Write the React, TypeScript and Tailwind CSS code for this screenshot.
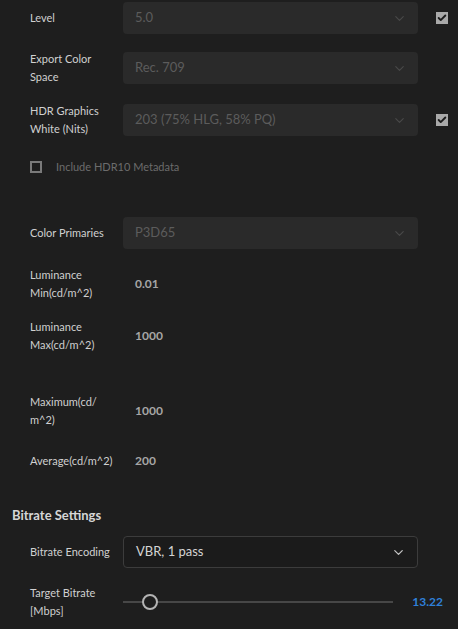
import { ChevronDown, Check } from 'lucide-react'

const font = { fontFamily: 'Lato, "Open Sans", sans-serif' }

function Label({ lines }: { lines: string[] }) {
  return (
    <div className="w-[93px] shrink-0 text-[11px] leading-[18px] text-[#d0d0d0]">
      {lines.map((l) => (
        <div key={l}>{l}</div>
      ))}
    </div>
  )
}

function DisabledSelect({ value }: { value: string }) {
  return (
    <div className="flex h-8 w-[295px] items-center justify-between rounded-[4px] bg-[#2a2a2a] pl-3 pr-[11px]">
      <span className="text-[13px] text-[#5c5c5c]">{value}</span>
      <ChevronDown className="h-[15px] w-[15px] text-[#4a4a4a]" strokeWidth={1.75} />
    </div>
  )
}

function CheckedBox() {
  return (
    <div className="flex h-3 w-3 items-center justify-center bg-[#a9a9a9]">
      <Check className="h-[10px] w-[10px] text-[#1c1c1c]" strokeWidth={4.5} />
    </div>
  )
}

function Row({
  label,
  children,
  className = '',
}: {
  label: string[]
  children: React.ReactNode
  className?: string
}) {
  return (
    <div className={`flex items-center pl-[30px] ${className}`}>
      <Label lines={label} />
      {children}
    </div>
  )
}

function Value({ v }: { v: string }) {
  return <span className="pl-3 text-[12px] font-bold text-[#a6a6a6]">{v}</span>
}

export default function App() {
  return (
    <div className="h-[629px] w-[458px] overflow-hidden bg-[#1e1e1e]" style={font}>
      <Row label={['Level']} className="mt-[2px] h-8">
        <DisabledSelect value="5.0" />
        <div className="ml-[18px]">
          <CheckedBox />
        </div>
      </Row>

      <Row label={['Export Color', 'Space']} className="mt-[18px] h-8">
        <DisabledSelect value="Rec. 709" />
      </Row>

      <Row label={['HDR Graphics', 'White (Nits)']} className="mt-5 h-8">
        <DisabledSelect value="203 (75% HLG, 58% PQ)" />
        <div className="ml-[18px]">
          <CheckedBox />
        </div>
      </Row>

      <div className="mt-[23px] flex h-4 items-center gap-[14px] pl-[30px]">
        <div className="h-3 w-3 border-2 border-[#7a7a7a]" />
        <span className="text-[11px] text-[#6c6c6c]">Include HDR10 Metadata</span>
      </div>

      <Row label={['Color Primaries']} className="mt-[42px] h-8">
        <DisabledSelect value="P3D65" />
      </Row>

      <Row label={['Luminance', 'Min(cd/m^2)']} className="mt-[17px] h-9">
        <Value v="0.01" />
      </Row>

      <Row label={['Luminance', 'Max(cd/m^2)']} className="mt-4 h-9">
        <Value v="1000" />
      </Row>

      <Row label={['Maximum(cd/', 'm^2)']} className="mt-[39px] h-9">
        <Value v="1000" />
      </Row>

      <Row label={['Average(cd/m^2)']} className="mt-[23px] h-[18px]">
        <Value v="200" />
      </Row>

      <div className="mt-9 flex h-5 items-center pl-3 text-[13px] font-bold text-[#d6d6d6]">
        Bitrate Settings
      </div>

      <Row label={['Bitrate Encoding']} className="mt-[10px] h-8">
        <div className="flex h-8 w-[295px] items-center justify-between rounded-[4px] border border-[#3c3c3c] bg-[#1b1b1b] pl-3 pr-[11px]">
          <span className="text-[13px] text-[#d4d4d4]">VBR, 1 pass</span>
          <ChevronDown className="h-[15px] w-[15px] text-[#c4c4c4]" strokeWidth={2} />
        </div>
      </Row>

      <Row label={['Target Bitrate', '[Mbps]']} className="mt-4 h-9">
        <div className="relative flex h-4 w-[270px] items-center">
          <div className="h-[2px] w-full bg-[#474747]" />
          <div className="absolute left-[19px] top-0 h-4 w-4 rounded-full border-2 border-[#b4b4b4] bg-[#1e1e1e]" />
        </div>
        <span className="ml-auto pr-[15px] text-[12px] font-bold text-[#2f80d9]">13.22</span>
      </Row>
    </div>
  )
}
